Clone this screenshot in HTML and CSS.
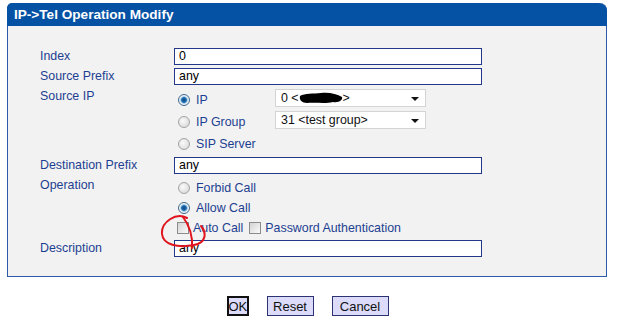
FILE: index.html
```html
<!DOCTYPE html>
<html lang="en">
<head>
    <meta charset="UTF-8">
    <title>IP-&gt;Tel Operation Modify</title>
    <link rel="stylesheet" href="styles.css">
</head>
<body>
    <div class="page">
        <div class="panel">
            <div class="panel-title">IP-&gt;Tel Operation Modify</div>
            <div class="panel-body">
                <div class="row">
                    <div class="label">Index</div>
                    <div class="field"><div class="text-input">0</div></div>
                </div>
                <div class="row">
                    <div class="label">Source Prefix</div>
                    <div class="field"><div class="text-input">any</div></div>
                </div>
                <div class="row">
                    <div class="label">Source IP</div>
                    <div class="options wide">
                        <div class="opt">
                            <span class="radio on"></span><span class="opt-text">IP</span>
                            <div class="select">0 &lt;<svg class="blot" width="44" height="12" viewBox="0 0 44 12"><path d="M1 4 C6 1 14 2 22 1 C30 0 38 2 43 5 C44 8 40 11 34 10 C26 12 16 10 8 11 C3 11 0 8 1 4 Z" fill="#000"/></svg>&gt;<span class="arrow"></span></div>
                        </div>
                        <div class="opt">
                            <span class="radio"></span><span class="opt-text">IP Group</span>
                            <div class="select">31 &lt;test group&gt;<span class="arrow"></span></div>
                        </div>
                        <div class="opt">
                            <span class="radio"></span><span class="opt-text">SIP Server</span>
                        </div>
                    </div>
                </div>
                <div class="row">
                    <div class="label">Destination Prefix</div>
                    <div class="field"><div class="text-input">any</div></div>
                </div>
                <div class="row">
                    <div class="label">Operation</div>
                    <div class="options">
                        <div class="opt">
                            <span class="radio"></span><span class="opt-text">Forbid Call</span>
                        </div>
                        <div class="opt">
                            <span class="radio on"></span><span class="opt-text">Allow Call</span>
                        </div>
                        <div class="opt checks">
                            <span class="check"></span><span class="check-text">Auto Call</span>
                            <span class="check"></span><span class="check-text">Password Authentication</span>
                        </div>
                    </div>
                </div>
                <div class="row">
                    <div class="label">Description</div>
                    <div class="field"><div class="text-input">any</div></div>
                </div>
            </div>
            <!-- red hand-drawn mark around the Auto Call box -->
            <svg class="mark" width="60" height="45" viewBox="0 0 60 45">
                <path d="M31 5 C20 -1 5 9 6 21 C7 32 22 35 38 32 C50 30 51 20 45 13" fill="none" stroke="#e0141e" stroke-width="2" stroke-linecap="round"/>
                <path d="M27 4 C33 12 37 22 36 35" fill="none" stroke="#e0141e" stroke-width="2" stroke-linecap="round"/>
            </svg>
        </div>
        <div class="buttons">
            <button class="btn ok">OK</button>
            <button class="btn reset">Reset</button>
            <button class="btn cancel">Cancel</button>
        </div>
    </div>
</body>
</html>
```

FILE: styles.css
```css
body {
    margin: 0;
    background-color: #fff;
    font-family: "Liberation Sans", Arial, sans-serif;
    font-size: 12.4px;
}
.page {
    padding: 3px 0 0 7px;
    width: 600px;
}
.panel {
    position: relative;
    box-sizing: border-box;
    width: 600px;
    border: 1px solid #2d5aa6;
    border-top: none;
    border-radius: 6px 7px 0 0;
    background-color: #f2f2f2;
}
.panel-title {
    height: 23px;
    line-height: 23px;
    margin: 0 -1px;
    padding-left: 7px;
    background-color: #0552a5;
    border-radius: 5px 8px 0 0;
    color: #fff;
    font-size: 13.6px;
    font-weight: bold;
}
.panel-body {
    padding: 20px 0 18px 32px;
}
.row {
    display: flex;
    min-height: 20px;
}
.label {
    width: 134px;
    flex-shrink: 0;
    line-height: 20px;
    color: #1d3f91;
}
.field {
    display: flex;
    align-items: center;
}
.text-input {
    box-sizing: border-box;
    width: 308px;
    height: 17px;
    line-height: 15px;
    padding-left: 4px;
    background-color: #fff;
    border: 1px solid #23388a;
    color: #000;
}
.options {
    padding-top: 3px;
}
.opt {
    display: flex;
    align-items: center;
    height: 20px;
    padding-left: 4px;
}
.options.wide .opt {
    height: 22px;
}
.radio {
    box-sizing: border-box;
    width: 12px;
    height: 12px;
    border-radius: 50%;
    border: 1px solid #a4a4a4;
    background: radial-gradient(circle at 40% 40%, #fbfbfb 0, #dedede 70%);
}
.radio.on {
    border-color: #3e6a92;
    background: radial-gradient(circle at 50% 50%, #0c3f78 0, #2474b8 2.5px, #8fc0e4 3.2px, #f4f4f4 4.2px, #d8d8d8 100%);
}
.opt-text {
    width: 79px;
    margin-left: 6px;
    color: #1d3f91;
}
.select {
    position: relative;
    align-self: flex-start;
    box-sizing: border-box;
    width: 151px;
    height: 18px;
    line-height: 16px;
    padding-left: 5px;
    background-color: #fff;
    border: 1px solid #d4d4d4;
    color: #111;
    font-size: 12.4px;
}
.blot {
    vertical-align: -2px;
}
.arrow {
    position: absolute;
    right: 6px;
    top: 7px;
    border-left: 4px solid transparent;
    border-right: 4px solid transparent;
    border-top: 4px solid #111;
}
.checks {
    padding-left: 3px;
}
.check {
    box-sizing: border-box;
    width: 12px;
    height: 12px;
    border: 1px solid #8c8c8c;
    background: linear-gradient(135deg, #d4d4d4, #fafafa);
}
.check-text {
    margin: 0 6px 0 4px;
    color: #1d3f91;
}
.mark {
    position: absolute;
    left: 148px;
    top: 210px;
}
.buttons {
    display: flex;
    justify-content: center;
    gap: 18px;
    margin-top: 19px;
    padding-left: 1px;
}
.btn {
    box-sizing: border-box;
    height: 20px;
    padding: 0;
    background-color: #dcdcfa;
    border: 1px solid #2c3272;
    color: #111;
    font-family: "Liberation Sans", Arial, sans-serif;
    font-size: 13px;
}
.btn.ok {
    width: 22px;
    border: 2px solid #111;
}
.btn.reset {
    width: 47px;
}
.btn.cancel {
    width: 57px;
}
```
